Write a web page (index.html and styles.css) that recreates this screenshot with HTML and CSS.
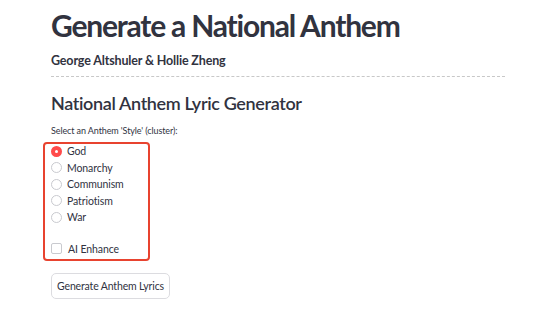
FILE: index.html
```html
<!DOCTYPE html>
<html lang="en">
<head>
    <meta charset="UTF-8">
    <meta name="viewport" content="width=device-width, initial-scale=1.0">
    <title>Generate a National Anthem</title>
    <link rel="stylesheet" href="styles.css">
</head>
<body>
    <main class="page">
        <h1>Generate a National Anthem</h1>
        <h4 class="authors">George Altshuler &amp; Hollie Zheng</h4>
        <hr class="divider">

        <h2>National Anthem Lyric Generator</h2>
        <div class="field-label">Select an Anthem 'Style' (cluster):</div>

        <div class="options-box">
            <label class="option"><span class="radio checked"></span>God</label>
            <label class="option"><span class="radio"></span>Monarchy</label>
            <label class="option"><span class="radio"></span>Communism</label>
            <label class="option"><span class="radio"></span>Patriotism</label>
            <label class="option"><span class="radio"></span>War</label>
            <label class="option check-option"><span class="checkbox"></span>AI Enhance</label>
        </div>

        <button class="generate-btn">Generate Anthem Lyrics</button>
    </main>
</body>
</html>
```

FILE: styles.css
```css
body {
    font-family: 'Lato', 'Noto Sans', sans-serif;
    background-color: #ffffff;
    color: #31333f;
    margin: 0;
}

.page {
    padding: 6px 49px 0 51px;
}

h1 {
    font-size: 30px;
    font-weight: 700;
    margin: 0;
    line-height: 38px;
    letter-spacing: -1.2px;
}

.authors {
    font-size: 12.5px;
    font-weight: 700;
    margin: 9px 0 0;
    line-height: 16px;
    letter-spacing: -0.15px;
}

.divider {
    border: none;
    border-top: 1px dashed #c8c8c8;
    margin: 7px 0 0;
}

h2 {
    font-size: 18px;
    font-weight: 600;
    margin: 14px 0 0;
    line-height: 24px;
    letter-spacing: -0.35px;
}

.field-label {
    font-size: 9px;
    margin-top: 10px;
    line-height: 11px;
    letter-spacing: -0.1px;
    color: #31333f;
}

.options-box {
    display: flex;
    flex-direction: column;
    width: 97px;
    margin: 6px 0 0 -8px;
    padding: 0 0 2px 6px;
    border: 2px solid #e8432f;
    border-radius: 4px;
}

.option {
    display: flex;
    align-items: center;
    gap: 5px;
    height: 16.5px;
    font-size: 10.5px;
    letter-spacing: -0.1px;
    color: #31333f;
}

.option:first-child {
    margin-top: -1px;
}

.check-option {
    margin-top: 15px;
}

.radio {
    width: 11px;
    height: 11px;
    border-radius: 50%;
    border: 1px solid #c9cacf;
    box-sizing: border-box;
    background: #fff;
}

.radio.checked {
    border: 4px solid #ff4b4b;
    background: #fff;
}

.checkbox {
    width: 11px;
    height: 11px;
    border-radius: 2px;
    border: 1px solid #c9cacf;
    box-sizing: border-box;
    margin-right: 1px;
}

.generate-btn {
    display: block;
    margin-top: 12px;
    font-family: inherit;
    font-size: 10.5px;
    letter-spacing: -0.15px;
    white-space: nowrap;
    color: #31333f;
    background: #fff;
    border: 1px solid #dcdce0;
    border-radius: 5px;
    padding: 0;
    height: 26px;
    width: 119px;
}
```
